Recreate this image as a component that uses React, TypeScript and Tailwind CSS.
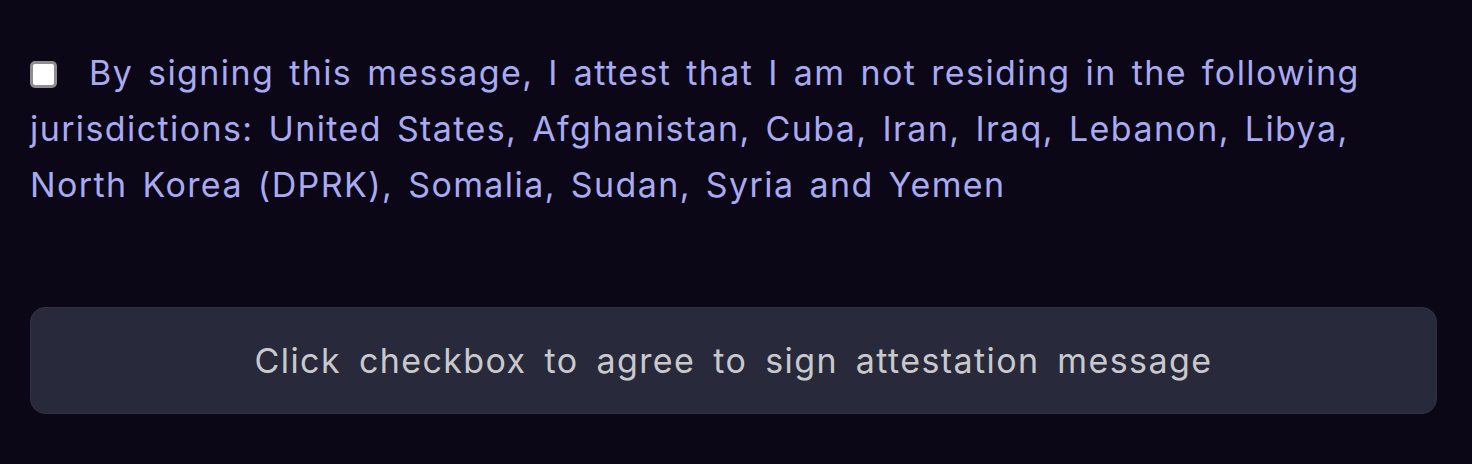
import React, { useState } from 'react';

export default function App() {
  const [checked, setChecked] = useState(false);

  return (
    <div
      className="w-[1472px] h-[464px] bg-[#0c0716] px-[30px] pt-[45px] overflow-hidden"
      style={{ fontFamily: 'Inter, "Noto Sans", sans-serif' }}
    >
      <label className="block text-[34px] leading-[56px] tracking-[1.4px] [word-spacing:4px] text-[#a9aaf2] cursor-pointer">
        <span
          onClick={() => setChecked(!checked)}
          className={`inline-block align-[-3px] w-[27px] h-[27px] mr-[32px] rounded-[5px] border-[3px] border-[#8d8d92] ${checked ? 'bg-[#a9aaf2]' : 'bg-white'}`}
        />
        By signing this message, I attest that I am not residing in the following
        <br />
        jurisdictions: United States, Afghanistan, Cuba, Iran, Iraq, Lebanon, Libya,
        <br />
        North Korea (DPRK), Somalia, Sudan, Syria and Yemen
      </label>

      <button
        className="mt-[94px] w-[1407px] h-[107px] rounded-[15px] bg-[#282a3c] border border-[#2f3145] text-[34px] tracking-[1.4px] [word-spacing:7px] text-[#c9c9cc] flex items-center justify-center"
      >
        Click checkbox to agree to sign attestation message
      </button>
    </div>
  );
}
